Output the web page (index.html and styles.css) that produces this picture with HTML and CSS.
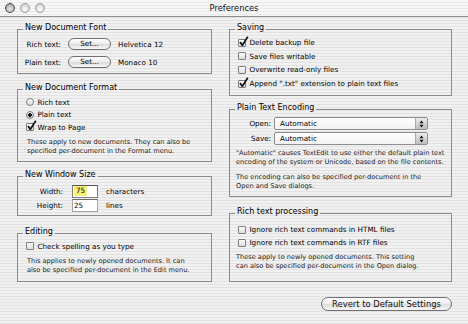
FILE: index.html
```html
<!DOCTYPE html>
<html>
<head>
<meta charset="utf-8">
<title>Preferences</title>
<link rel="stylesheet" href="styles.css">
</head>
<body>
<div class="window">
  <div class="titlebar">
    <div class="lights">
      <span class="light close"></span>
      <span class="light"></span>
      <span class="light"></span>
    </div>
    <div class="title">Preferences</div>
    <div></div>
  </div>
  <div class="content">
    <div class="col left">
      <fieldset class="group g-font">
        <legend>New Document Font</legend>
        <div class="body">
          <div class="font-row"><span class="lbl">Rich text:</span><button class="pill">Set...</button><span class="val">Helvetica 12</span></div>
          <div class="font-row"><span class="lbl">Plain text:</span><button class="pill">Set...</button><span class="val">Monaco 10</span></div>
        </div>
      </fieldset>
      <fieldset class="group g-format">
        <legend>New Document Format</legend>
        <div class="body">
          <div class="opt"><span class="radio"></span>Rich text</div>
          <div class="opt"><span class="radio on"></span>Plain text</div>
          <div class="opt"><span class="check"><svg class="tick" viewBox="0 0 11 11" width="11" height="11"><path d="M2 6 L4.3 9.2 L9.8 0.8" fill="none" stroke="#111" stroke-width="1.7" stroke-linejoin="round"/></svg></span>Wrap to Page</div>
          <p class="desc">These apply to new documents. They can also be<br>specified per-document in the Format menu.</p>
        </div>
      </fieldset>
      <fieldset class="group g-size">
        <legend>New Window Size</legend>
        <div class="body">
          <div class="size-row"><span class="lbl">Width:</span><span class="field focus"><span class="sel">75</span></span><span class="unit">characters</span></div>
          <div class="size-row"><span class="lbl">Height:</span><span class="field">25</span><span class="unit">lines</span></div>
        </div>
      </fieldset>
      <fieldset class="group g-edit">
        <legend>Editing</legend>
        <div class="body">
          <div class="opt"><span class="check"></span>Check spelling as you type</div>
          <p class="desc">This applies to newly opened documents. It can<br>also be specified per-document in the Edit menu.</p>
        </div>
      </fieldset>
    </div>
    <div class="col right">
      <fieldset class="group g-save">
        <legend>Saving</legend>
        <div class="body">
          <div class="opt"><span class="check"><svg class="tick" viewBox="0 0 11 11" width="11" height="11"><path d="M2 6 L4.3 9.2 L9.8 0.8" fill="none" stroke="#111" stroke-width="1.7" stroke-linejoin="round"/></svg></span>Delete backup file</div>
          <div class="opt"><span class="check"></span>Save files writable</div>
          <div class="opt"><span class="check"></span>Overwrite read-only files</div>
          <div class="opt"><span class="check"><svg class="tick" viewBox="0 0 11 11" width="11" height="11"><path d="M2 6 L4.3 9.2 L9.8 0.8" fill="none" stroke="#111" stroke-width="1.7" stroke-linejoin="round"/></svg></span>Append ".txt" extension to plain text files</div>
        </div>
      </fieldset>
      <fieldset class="group g-enc">
        <legend>Plain Text Encoding</legend>
        <div class="body">
          <div class="enc-row"><span class="lbl">Open:</span><span class="popup"><span class="ptext">Automatic</span><span class="arrows"><svg viewBox="0 0 5 8" width="5" height="8"><path d="M0.5 3.3 L2.5 0.5 L4.5 3.3 Z M0.5 4.7 L2.5 7.5 L4.5 4.7 Z" fill="#111"/></svg></span></span></div>
          <div class="enc-row"><span class="lbl">Save:</span><span class="popup"><span class="ptext">Automatic</span><span class="arrows"><svg viewBox="0 0 5 8" width="5" height="8"><path d="M0.5 3.3 L2.5 0.5 L4.5 3.3 Z M0.5 4.7 L2.5 7.5 L4.5 4.7 Z" fill="#111"/></svg></span></span></div>
          <p class="desc d1">"Automatic" causes TextEdit to use either the default plain text<br>encoding of the system or Unicode, based on the file contents.</p>
          <p class="desc d2">The encoding can also be specified per-document in the<br>Open and Save dialogs.</p>
        </div>
      </fieldset>
      <fieldset class="group g-rich">
        <legend>Rich text processing</legend>
        <div class="body">
          <div class="opt"><span class="check"></span>Ignore rich text commands in HTML files</div>
          <div class="opt"><span class="check"></span>Ignore rich text commands in RTF files</div>
          <p class="desc">These apply to newly opened documents. This setting<br>can also be specified per-document in the Open dialog.</p>
        </div>
      </fieldset>
      <div class="actions"><button class="pill big">Revert to Default Settings</button></div>
    </div>
  </div>
</div>
</body>
</html>
```

FILE: styles.css
```css
* { box-sizing: border-box; }
html, body { margin: 0; padding: 0; }
body {
  width: 468px;
  height: 324px;
  overflow: hidden;
  font-family: "DejaVu Sans", "Liberation Sans", sans-serif;
  color: #000;
  background: repeating-linear-gradient(180deg, #f1f1f1 0 2px, #e2e2e2 2px 3px);
}
.window { width: 468px; height: 324px; }

.titlebar {
  height: 17px;
  border-bottom: 1px solid #8e8e8e;
  display: grid;
  grid-template-columns: 1fr auto 1fr;
  align-items: center;
  background: repeating-linear-gradient(180deg, #f7f7f7 0 2px, #e8e8e8 2px 3px);
}
.lights { display: flex; gap: 5px; padding-left: 5px; }
.light {
  width: 10px; height: 10px; border-radius: 50%;
  border: 1px solid #9c9c9c;
  background: radial-gradient(circle at 50% 65%, #ffffff 0, #e2e2e2 45%, #c4c4c4 100%);
}
.light.close {
  border-color: #4c4c4c;
  background: radial-gradient(circle at 50% 60%, #e8e8e8 0, #b8b8b8 55%, #7a7a7a 100%);
}
.title { font-size: 8.3px; line-height: 10px; color: #111; }

.content {
  display: flex;
  gap: 17px;
  padding: 6px 16px 0 17px;
}
.col { display: flex; flex-direction: column; }
.left { width: 195px; }
.right { width: 223px; }

.group {
  margin: 0;
  padding: 0;
  min-width: 0;
  border: 1px solid #8b8b8b;
}
.group legend {
  margin-left: 5px;
  padding: 0 2px 3px;
  font-size: 8px;
  line-height: 10px;
  color: #000;
}
.body { display: flex; flex-direction: column; font-size: 7.2px; }

.desc {
  margin: 4px 0 0;
  padding-left: 9px;
  font-size: 6.6px;
  line-height: 9px;
  color: #1a1a1a;
}

/* font box */
.g-font .body { padding: 2px 0 5px; gap: 6px; }
.font-row { display: flex; align-items: center; height: 12px; }
.font-row .lbl { width: 43px; text-align: right; }
.font-row .pill { margin-left: 7px; }
.font-row .val { margin-left: 7px; }

.pill {
  width: 43px;
  height: 12px;
  padding: 0;
  border: 1px solid #707070;
  border-radius: 6px;
  background: linear-gradient(180deg, #ffffff 0, #eeeeee 45%, #dcdcdc 55%, #f7f7f7 100%);
  font-family: inherit;
  font-size: 7.2px;
  line-height: 10px;
  color: #000;
  display: flex;
  align-items: center;
  justify-content: center;
}

/* options */
.opt { display: flex; align-items: center; height: 12.5px; padding-left: 8px; }
.radio, .check {
  position: relative;
  flex: none;
  width: 8px; height: 8px;
  margin-right: 3.5px;
  border: 1px solid #7e7e7e;
  background: linear-gradient(180deg, #fdfdfd, #dcdcdc);
}
.radio { border-radius: 50%; }
.radio.on {
  background: radial-gradient(circle, #1c1c1c 0 1.6px, transparent 2.1px), linear-gradient(180deg, #f4f4f4, #c8c8c8);
}
.check { border-radius: 1px; }
.tick { position: absolute; left: -1px; top: -4px; overflow: visible; }

.g-format { margin-top: 9px; }
.g-format .body { padding: 0 0 5px; }

/* window size */
.g-size { margin-top: 8px; }
.g-size .body { padding: 1.5px 0 3px; }
.size-row { display: flex; align-items: center; height: 14px; }
.size-row .lbl { width: 45px; text-align: right; }
.field {
  margin-left: 9px;
  width: 26px; height: 13px;
  border: 1px solid #a4a4a4;
  border-top-color: #6c6c6c;
  background: #fff;
  padding-left: 1px;
  display: flex; align-items: center;
}
.field.focus { border-color: #7d7d7d; border-top-color: #555; }
.sel { background: #f7ef7a; padding: 0 2px; line-height: 10px; }
.unit { margin-left: 8px; }

.g-edit { margin-top: 10.5px; }
.g-edit .body { padding: 0 0 6.5px; }
.g-edit .opt { height: 13px; }

/* right column */
.g-save .body { padding: 0 0 4.5px; }
.g-save .opt { height: 13.6px; }

.g-enc { margin-top: 7.5px; }
.g-enc .body { padding: 0 0 5px; }
.enc-row { display: flex; align-items: center; height: 15px; }
.enc-row .lbl { width: 41px; text-align: right; }
.popup {
  margin-left: 3px;
  width: 154px; height: 13px;
  border: 1px solid #8d8d8d;
  border-radius: 2px;
  background: linear-gradient(180deg, #ffffff, #f1f1f1);
  display: flex; align-items: stretch;
}
.ptext { flex: 1; padding-left: 5px; display: flex; align-items: center; }
.arrows {
  width: 12px;
  border-left: 1px solid #a9a9a9;
  background: linear-gradient(180deg, #ececec, #bdbdbd);
  display: flex; align-items: center; justify-content: center;
}
.g-enc .desc { padding-left: 6px; }
.g-enc .d1 { margin-top: 3px; }
.g-enc .d2 { margin-top: 6px; }

.g-rich { margin-top: 10px; }
.g-rich .body { padding: 3px 0 9.5px; }
.g-rich .opt { height: 13px; }
.g-rich .desc { padding-left: 6px; }

.actions { display: flex; justify-content: flex-end; margin-top: 15px; }
.pill.big {
  width: 131px;
  height: 14px;
  border-radius: 7px;
  font-size: 8.4px;
  color: #111;
}
```
